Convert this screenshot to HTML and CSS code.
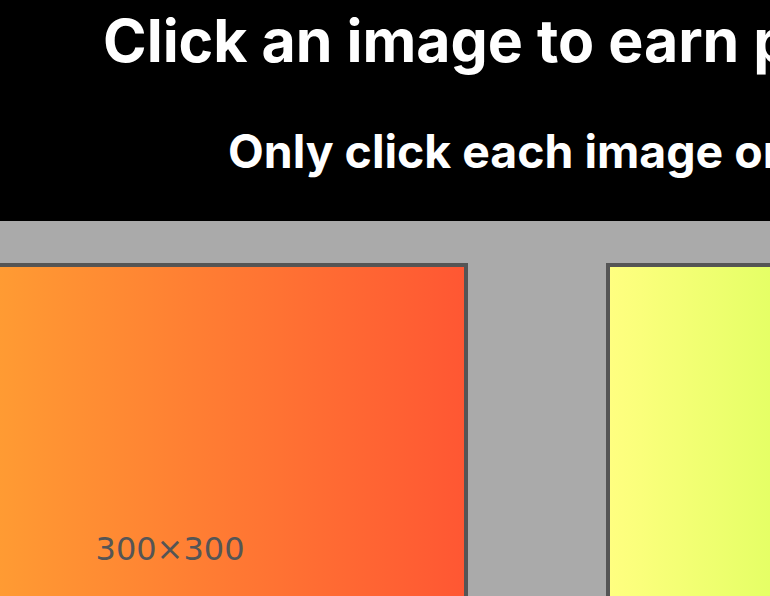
FILE: index.html
```html
<!DOCTYPE html>
<html lang="en">
<head>
<meta charset="utf-8">
<title>Click an image to earn points</title>
<link rel="stylesheet" href="styles.css">
</head>
<body>
<div class="page">
  <header class="header">
    <h1 class="title">Click an image to earn points</h1>
    <h2 class="subtitle">Only click each image once!</h2>
  </header>
  <main class="board">
    <div class="cards">
      <div class="card"><div class="img img-orange"><span class="dim">300×300</span></div></div>
      <div class="card"><div class="img img-yellow"><span class="dim">300×300</span></div></div>
    </div>
  </main>
</div>
</body>
</html>
```

FILE: styles.css
```css
html, body {
  margin: 0;
  padding: 0;
  overflow: hidden;
  background: #aaaaaa;
}
.page {
  width: 1060px;
  font-family: Inter, "Noto Sans", sans-serif;
}
.header {
  background: #000;
  color: #fff;
  padding: 6px 0 42px;
}
.title {
  margin: 0;
  padding-left: 103px;
  font-size: 59px;
  line-height: 70px;
  font-weight: 700;
  white-space: nowrap;
}
.subtitle {
  margin: 47px 0 0;
  padding-left: 228px;
  font-size: 46.4px;
  line-height: 56px;
  font-weight: 700;
  white-space: nowrap;
}
.board {
  padding-top: 42px;
  height: 400px;
}
.cards {
  display: flex;
  gap: 138px;
  margin-left: -128px;
}
.card {
  flex: none;
  border: 4px solid #555;
}
.img {
  width: 588px;
  height: 588px;
  display: flex;
  align-items: center;
  justify-content: center;
}
.img-orange {
  background: linear-gradient(to right, #ffad33, #ff5733);
}
.img-yellow {
  background: linear-gradient(to right, #ffff80, #a0ff20);
}
.dim {
  font-family: "DejaVu Sans", sans-serif;
  font-size: 32px;
  letter-spacing: 0;
  color: #555;
  transform: translateY(-12px);
}
```
